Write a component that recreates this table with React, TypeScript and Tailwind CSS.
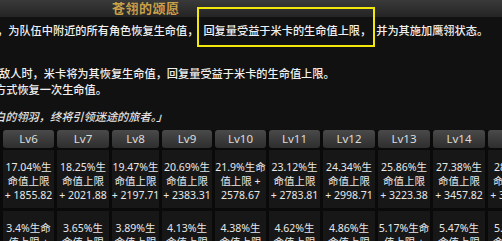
const cols = [
  { lv: "Lv5", w: "w-[51px]", a: ["15.82%生", "命值上限", "+ 1700.28"], b: ["3.16%生", "命值上限", "+ 340.06"] },
  { lv: "Lv6", w: "w-[51px]", a: ["17.04%生", "命值上限", "+ 1855.82"], b: ["3.4%生命", "值上限 +", "371.16"] },
  { lv: "Lv7", w: "w-[52px]", a: ["18.25%生", "命值上限", "+ 2021.88"], b: ["3.65%生", "命值上限", "+ 404.38"] },
  { lv: "Lv8", w: "w-[47px]", a: ["19.47%生", "命值上限", "+ 2197.71"], b: ["3.89%生", "命值上限", "+ 439.54"] },
  { lv: "Lv9", w: "w-[50px]", a: ["20.69%生", "命值上限", "+ 2383.31"], b: ["4.13%生", "命值上限", "+ 476.66"] },
  { lv: "Lv10", w: "w-[51px]", a: ["21.9%生命", "值上限 +", "2578.67"], b: ["4.38%生", "命值上限", "+ 515.73"] },
  { lv: "Lv11", w: "w-[51px]", a: ["23.12%生", "命值上限", "+ 2783.81"], b: ["4.62%生", "命值上限", "+ 556.76"] },
  { lv: "Lv12", w: "w-[52px]", a: ["24.34%生", "命值上限", "+ 2998.71"], b: ["4.86%生", "命值上限", "+ 599.74"] },
  { lv: "Lv13", w: "w-[52px]", a: ["25.86%生", "命值上限", "+ 3223.38"], b: ["5.17%生命", "值上限 +", "644.68"] },
  { lv: "Lv14", w: "w-[52px]", a: ["27.38%生", "命值上限", "+ 3457.82"], b: ["5.47%生", "命值上限", "+ 691.56"] },
  { lv: "Lv15", w: "w-[52px]", a: ["28.9%生", "命值上限", "+ 3702.03"], b: ["5.78%生", "命值上限", "+ 740.41"] },
];

function Cell({ lines }: { lines: string[] }) {
  return (
    <div className="h-[58px] bg-[#171717] flex flex-col items-center justify-center pt-[4px] text-[10.5px] leading-[14px] text-[#e8e8e8] whitespace-nowrap">
      {lines.map((l, i) => (
        <div key={i}>{l}</div>
      ))}
    </div>
  );
}

export default function App() {
  return (
    <div className="w-[502px] h-[241px] overflow-hidden bg-[#111111] font-['Noto_Sans','Noto_Sans_CJK_SC',sans-serif]">
      <div className="h-[17px] bg-gradient-to-b from-[#3a3a3a] to-[#242424] pl-[112px]">
        <span className="block text-[13px] leading-[16px] font-bold text-[#caa24a] tracking-[0.5px]">
          苍翎的颂愿
        </span>
      </div>

      <div className="pt-[6px] text-[11.2px] leading-[16px] font-medium text-[#f0f0f0] whitespace-nowrap">
        <div className="ml-[-3px]">
          ，为队伍中附近的所有角色恢复生命值，
          <span className="relative px-[5px]">
            回复量受益于米卡的生命值上限，
            <span className="absolute left-[-1px] right-[1px] top-[-16px] bottom-[-9px] border-2 border-[#f2e60a]"></span>
          </span>
          并为其施加鹰翎状态。
        </div>
        <div className="mt-[27px] ml-[-1px]">敌人时，米卡将为其恢复生命值，回复量受益于米卡的生命值上限。</div>
        <div className="ml-[-5px]">方式恢复一次生命值。</div>
        <div className="mt-[11px] ml-[-6px] italic text-[#e4e4e4]">白的翎羽，终将引领迷途的旅者。」</div>
      </div>

      <div className="mt-[5px] flex gap-[3px] ml-[-51px] bg-[#0a0a0a]">
        {cols.map((c) => (
          <div key={c.lv} className={`${c.w} shrink-0 flex flex-col`}>
            <div className="h-[18px] rounded-[3px] bg-gradient-to-b from-[#4a4a4a] to-[#2e2e2e] text-center text-[11.5px] leading-[18px] text-[#dcdcdc]">
              {c.lv}
            </div>
            <div className="mt-[2px]">
              <Cell lines={c.a} />
            </div>
            <div className="mt-[3px]">
              <Cell lines={c.b} />
            </div>
          </div>
        ))}
      </div>
    </div>
  );
}
